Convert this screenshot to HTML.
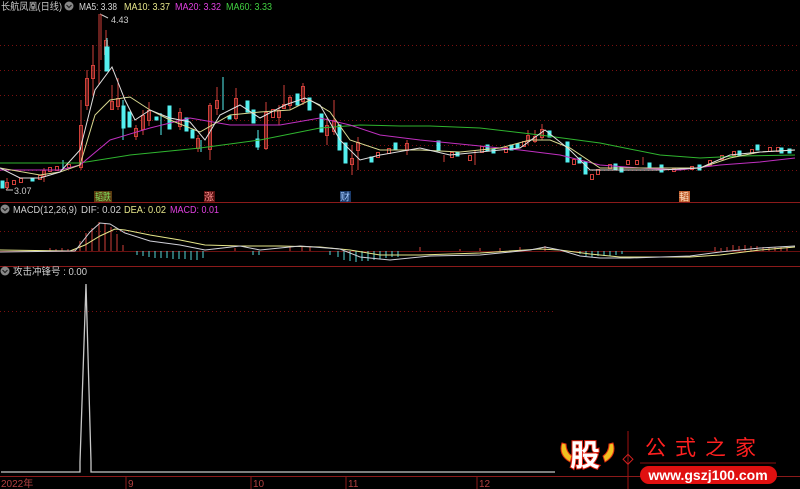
<!DOCTYPE html>
<html><head><meta charset="utf-8"><style>
html,body{margin:0;padding:0;background:#000;width:800px;height:489px;overflow:hidden}
svg{display:block}
text{font-family:"Liberation Sans","Noto Sans CJK SC",sans-serif}
</style></head><body>
<svg width="800" height="489" viewBox="0 0 800 489" xmlns="http://www.w3.org/2000/svg">
<g stroke="#7a1010" stroke-width="1" stroke-dasharray="1,3">
<line x1="0" y1="45.5" x2="800" y2="45.5"/><line x1="0" y1="70.5" x2="800" y2="70.5"/>
<line x1="0" y1="95.5" x2="800" y2="95.5"/><line x1="0" y1="120.5" x2="800" y2="120.5"/>
<line x1="0" y1="145.5" x2="800" y2="145.5"/><line x1="0" y1="170.5" x2="800" y2="170.5"/>
<line x1="0" y1="231.5" x2="800" y2="231.5"/><line x1="0" y1="311.5" x2="555" y2="311.5"/>
</g>
<line x1="0" y1="202.5" x2="800" y2="202.5" stroke="#8b1a1a"/>
<line x1="0" y1="266.5" x2="800" y2="266.5" stroke="#8b1a1a"/>
<line x1="0" y1="476.5" x2="800" y2="476.5" stroke="#8b1a1a"/>
<line x1="0" y1="251.5" x2="800" y2="251.5" stroke="#6a1010" stroke-width="1"/>
<!-- header -->
<text x="1" y="10" font-size="10" fill="#c8c8c8" textLength="61" lengthAdjust="spacingAndGlyphs">长航凤凰(日线)</text>
<circle cx="69" cy="6" r="4.5" fill="#888"/><path d="M66.5 5 L69 7.5 L71.5 5" stroke="#222" fill="none" stroke-width="1.2"/>
<text x="79" y="10" font-size="10" fill="#d8d8d8" textLength="38" lengthAdjust="spacingAndGlyphs">MA5: 3.38</text>
<text x="124" y="10" font-size="10" fill="#e6e68a" textLength="46" lengthAdjust="spacingAndGlyphs">MA10: 3.37</text>
<text x="175" y="10" font-size="10" fill="#e040e0" textLength="46" lengthAdjust="spacingAndGlyphs">MA20: 3.32</text>
<text x="226" y="10" font-size="10" fill="#40d040" textLength="46" lengthAdjust="spacingAndGlyphs">MA60: 3.33</text>
<text x="111" y="23" font-size="9" fill="#ccc">4.43</text>
<path d="M100 14 L108 18" stroke="#ccc"/>
<text x="14" y="194" font-size="9" fill="#ccc">3.07</text>
<path d="M6 190 L13 190 M6 190 L8 188" stroke="#ccc"/>
<!-- candles -->
<g stroke-width="1">
<g stroke="#d0403a" fill="none">
<line x1="7" y1="178" x2="7" y2="190"/><rect x="5.5" y="182.5" width="3" height="5"/>
<rect x="12.5" y="180.5" width="3" height="4"/><rect x="19.5" y="178.5" width="3" height="4"/>
<rect x="38.5" y="175.5" width="3" height="4"/><line x1="44" y1="168" x2="44" y2="182"/><rect x="42.5" y="170.5" width="3" height="6"/>
<rect x="48.5" y="167.5" width="3" height="4"/><rect x="55.5" y="166.5" width="3" height="4"/><rect x="67.5" y="164.5" width="3" height="3"/>
<line x1="81" y1="100" x2="81" y2="170"/><rect x="79.5" y="125.5" width="3" height="42"/>
<line x1="87" y1="70" x2="87" y2="110"/><rect x="85.5" y="78.5" width="3" height="27"/>
<line x1="93" y1="45" x2="93" y2="95"/><rect x="91.5" y="65.5" width="3" height="13"/>
<line x1="99" y1="14" x2="99" y2="85"/><line x1="101" y1="14" x2="101" y2="60"/>
<line x1="106" y1="30" x2="106" y2="70"/><rect x="104.5" y="40.5" width="3" height="14"/>
<line x1="112" y1="85" x2="112" y2="110"/><rect x="110.5" y="101.5" width="3" height="8"/>
<line x1="118" y1="78" x2="118" y2="110"/><rect x="116.5" y="98.5" width="3" height="8"/>
<line x1="136" y1="125" x2="136" y2="140"/><rect x="134.5" y="128.5" width="3" height="8"/>
<line x1="143" y1="110" x2="143" y2="135"/><rect x="141.5" y="115.5" width="3" height="14"/>
<line x1="149" y1="102" x2="149" y2="126"/><rect x="147.5" y="110.5" width="3" height="10"/>
<line x1="180" y1="108" x2="180" y2="130"/><rect x="178.5" y="112.5" width="3" height="14"/>
<line x1="198" y1="135" x2="198" y2="152"/><rect x="196.5" y="138.5" width="3" height="10"/>
<line x1="210" y1="103" x2="210" y2="160"/><rect x="208.5" y="105.5" width="3" height="44"/>
<line x1="217" y1="87" x2="217" y2="115"/><rect x="215.5" y="100.5" width="3" height="8"/>
<line x1="236" y1="88" x2="236" y2="120"/><rect x="234.5" y="98.5" width="3" height="20"/>
<line x1="266" y1="102" x2="266" y2="150"/><rect x="264.5" y="112.5" width="3" height="36"/>
<rect x="271.5" y="109.5" width="3" height="8"/><line x1="279" y1="105" x2="279" y2="125"/><rect x="277.5" y="110.5" width="3" height="7"/>
<line x1="284" y1="85" x2="284" y2="108"/><rect x="282.5" y="104.5" width="3" height="4"/>
<line x1="290" y1="95" x2="290" y2="110"/><rect x="288.5" y="97.5" width="3" height="8"/>
<line x1="303" y1="83" x2="303" y2="105"/><rect x="301.5" y="86.5" width="3" height="15"/>
<line x1="327" y1="118" x2="327" y2="145"/><rect x="325.5" y="125.5" width="3" height="10"/>
<line x1="334" y1="100" x2="334" y2="135"/><rect x="332.5" y="120.5" width="3" height="11"/>
<line x1="352" y1="145" x2="352" y2="175"/><rect x="350.5" y="158.5" width="3" height="6"/>
<line x1="358" y1="137" x2="358" y2="170"/><rect x="356.5" y="142.5" width="3" height="8"/>
<rect x="376.5" y="152.5" width="3" height="5"/><rect x="387.5" y="148.5" width="3" height="5"/><line x1="407" y1="140" x2="407" y2="155"/><rect x="405.5" y="143.5" width="3" height="7"/>
<line x1="444" y1="155" x2="444" y2="162"/><rect x="450.5" y="152.5" width="3" height="5"/><rect x="468.5" y="155.5" width="3" height="5"/><line x1="475" y1="150" x2="475" y2="165"/>
<rect x="480.5" y="146.5" width="3" height="6"/><rect x="504.5" y="147.5" width="3" height="5"/><rect x="522.5" y="141.5" width="3" height="5"/>
<line x1="528" y1="130" x2="528" y2="145"/><rect x="526.5" y="135.5" width="3" height="6"/><line x1="535" y1="130" x2="535" y2="143"/><rect x="533.5" y="136.5" width="3" height="5"/>
<line x1="542" y1="124" x2="542" y2="140"/><rect x="540.5" y="129.5" width="3" height="8"/>
<rect x="572.5" y="159.5" width="3" height="5"/><rect x="590.5" y="174.5" width="3" height="5"/><rect x="596.5" y="169.5" width="3" height="5"/>
<rect x="608.5" y="164.5" width="3" height="4"/><rect x="626.5" y="160.5" width="3" height="4"/><rect x="635.5" y="160.5" width="3" height="4"/><line x1="643" y1="157" x2="643" y2="165"/>
<rect x="672.5" y="168.5" width="3" height="3"/><rect x="690.5" y="166.5" width="3" height="3"/><rect x="708.5" y="160.5" width="3" height="5"/>
<rect x="720.5" y="155.5" width="3" height="4"/><rect x="732.5" y="151.5" width="3" height="4"/><rect x="750.5" y="149.5" width="3" height="4"/><rect x="768.5" y="147.5" width="3" height="4"/><rect x="776.5" y="147.5" width="3" height="4"/>
</g>
<g fill="#54f0f0" stroke="#54f0f0">
<rect x="1" y="181" width="3" height="7"/><rect x="31" y="179" width="3" height="2"/><line x1="63" y1="160" x2="63" y2="170"/>
<line x1="107" y1="38" x2="107" y2="48"/><rect x="105" y="47" width="4" height="24"/>
<line x1="123" y1="100" x2="123" y2="140"/><rect x="122" y="106" width="3" height="22"/>
<rect x="128" y="112" width="3" height="15"/><rect x="155" y="117" width="3" height="3"/><line x1="161" y1="113" x2="161" y2="135"/>
<rect x="168" y="106" width="3" height="23"/><rect x="185" y="118" width="3" height="13"/><rect x="191" y="130" width="3" height="8"/><line x1="201" y1="140" x2="201" y2="152"/>
<line x1="223" y1="77" x2="223" y2="110"/><rect x="228" y="116" width="3" height="3"/><rect x="246" y="101" width="3" height="11"/><rect x="252" y="110" width="3" height="13"/><rect x="256" y="139" width="3" height="8"/><line x1="258" y1="130" x2="258" y2="150"/>
<rect x="296" y="94" width="3" height="11"/><rect x="308" y="98" width="3" height="12"/><rect x="320" y="114" width="3" height="18"/><rect x="338" y="125" width="3" height="25"/><rect x="344" y="143" width="3" height="20"/>
<rect x="370" y="157" width="3" height="5"/><rect x="394" y="143" width="3" height="7"/><rect x="437" y="141" width="3" height="10"/><rect x="456" y="152" width="3" height="4"/><rect x="486" y="145" width="3" height="6"/><rect x="492" y="149" width="3" height="4"/>
<rect x="510" y="145" width="3" height="5"/><rect x="516" y="144" width="3" height="4"/><rect x="548" y="131" width="3" height="6"/><rect x="566" y="142" width="3" height="20"/><rect x="578" y="158" width="3" height="5"/><rect x="584" y="162" width="3" height="12"/>
<rect x="614" y="164" width="3" height="6"/><rect x="620" y="167" width="3" height="5"/><rect x="648" y="163" width="3" height="4"/><rect x="660" y="165" width="3" height="7"/><rect x="698" y="165" width="3" height="5"/><rect x="738" y="151" width="3" height="5"/><rect x="756" y="145" width="3" height="5"/><rect x="780" y="148" width="3" height="5"/><rect x="788" y="149" width="3" height="4"/>
</g>
</g>
<!-- MAs -->
<g fill="none" stroke-width="1">
<polyline stroke="#2fb52f" points="0,163 80,163 130,155 200,148 260,140 320,128 360,125 400,126 430,126 480,128 540,135 600,143 660,155 700,158 740,156 795,155"/>
<polyline stroke="#c030c0" points="0,170 60,170 80,165 110,140 150,128 190,118 230,125 280,125 320,118 350,125 380,135 420,140 470,145 520,150 560,155 600,165 640,168 680,170 720,165 760,162 795,158"/>
<polyline stroke="#d8d890" points="0,168 40,175 60,172 80,165 95,115 110,100 130,97 150,110 170,120 200,132 230,115 260,112 290,110 310,100 330,112 350,140 380,150 420,150 460,152 500,148 530,140 550,140 570,148 600,168 640,168 670,168 700,168 730,158 760,152 795,150"/>
<polyline stroke="#e0e0e0" points="0,168 20,178 40,178 60,172 80,150 95,90 112,67 125,100 135,120 150,110 170,118 190,122 205,140 220,115 240,105 260,118 285,105 305,98 320,105 340,140 360,160 380,155 420,148 450,155 480,152 520,148 545,130 570,150 590,170 620,170 660,170 700,168 730,155 760,152 795,150"/>
</g>
<!-- signal labels -->
<rect x="94" y="191" width="18" height="11" fill="#5a3a10"/><text x="95" y="200.5" font-size="10" fill="#7fdf5f" textLength="16" lengthAdjust="spacingAndGlyphs">韬跌</text>
<rect x="204" y="191" width="11" height="11" fill="#5a1010"/><text x="204" y="200.5" font-size="10" fill="#ff9090">涨</text>
<rect x="340" y="191" width="11" height="11" fill="#1a3a6a"/><text x="340" y="200.5" font-size="10" fill="#a0c8ff">财</text>
<rect x="679" y="191" width="11" height="11" fill="#c06030"/><text x="679" y="200.5" font-size="10" fill="#ffe0c0">韬</text>
<!-- MACD -->
<circle cx="5" cy="209" r="4.5" fill="#888"/><path d="M2.5 208 L5 210.5 L7.5 208" stroke="#222" fill="none" stroke-width="1.2"/>
<text x="13" y="213" font-size="10" fill="#d0d0d0" textLength="64" lengthAdjust="spacingAndGlyphs">MACD(12,26,9)</text>
<text x="81" y="213" font-size="10" fill="#d0d0d0" textLength="40" lengthAdjust="spacingAndGlyphs">DIF: 0.02</text>
<text x="124" y="213" font-size="10" fill="#e6e68a" textLength="42" lengthAdjust="spacingAndGlyphs">DEA: 0.02</text>
<text x="170" y="213" font-size="10" fill="#e040e0" textLength="49" lengthAdjust="spacingAndGlyphs">MACD: 0.01</text>
<g stroke="#d0403a">
<line x1="50" y1="251" x2="50" y2="248"/><line x1="56" y1="251" x2="56" y2="249"/><line x1="62" y1="251" x2="62" y2="248"/><line x1="68" y1="251" x2="68" y2="249"/><line x1="74" y1="251" x2="74" y2="249"/>
<line x1="80" y1="251" x2="80" y2="241"/><line x1="86" y1="251" x2="86" y2="233"/><line x1="92" y1="251" x2="92" y2="228"/><line x1="99" y1="251" x2="99" y2="222"/><line x1="105" y1="251" x2="105" y2="224"/><line x1="111" y1="251" x2="111" y2="227"/><line x1="117" y1="251" x2="117" y2="234"/><line x1="123" y1="251" x2="123" y2="245"/>
<line x1="235" y1="251" x2="235" y2="248"/><line x1="290" y1="251" x2="290" y2="246"/><line x1="302" y1="251" x2="302" y2="246"/><line x1="310" y1="251" x2="310" y2="247"/>
<line x1="420" y1="251" x2="420" y2="247"/><line x1="460" y1="251" x2="460" y2="249"/><line x1="480" y1="251" x2="480" y2="248"/><line x1="500" y1="251" x2="500" y2="248"/><line x1="520" y1="251" x2="520" y2="247"/><line x1="545" y1="251" x2="545" y2="246"/>
<line x1="715" y1="251" x2="715" y2="247"/><line x1="721" y1="251" x2="721" y2="248"/><line x1="727" y1="251" x2="727" y2="247"/><line x1="733" y1="251" x2="733" y2="245"/><line x1="739" y1="251" x2="739" y2="246"/><line x1="745" y1="251" x2="745" y2="245"/><line x1="751" y1="251" x2="751" y2="246"/><line x1="757" y1="251" x2="757" y2="246"/><line x1="763" y1="251" x2="763" y2="247"/><line x1="769" y1="251" x2="769" y2="247"/><line x1="775" y1="251" x2="775" y2="247"/><line x1="781" y1="251" x2="781" y2="247"/><line x1="787" y1="251" x2="787" y2="247"/>
</g>
<g stroke="#54d8d8">
<line x1="137" y1="251" x2="137" y2="255"/><line x1="143" y1="251" x2="143" y2="256"/><line x1="149" y1="251" x2="149" y2="257"/><line x1="155" y1="251" x2="155" y2="258"/><line x1="161" y1="251" x2="161" y2="258"/><line x1="167" y1="251" x2="167" y2="258"/><line x1="173" y1="251" x2="173" y2="259"/><line x1="179" y1="251" x2="179" y2="259"/><line x1="185" y1="251" x2="185" y2="259"/><line x1="191" y1="251" x2="191" y2="260"/><line x1="197" y1="251" x2="197" y2="260"/><line x1="203" y1="251" x2="203" y2="258"/>
<line x1="253" y1="251" x2="253" y2="255"/><line x1="259" y1="251" x2="259" y2="255"/><line x1="330" y1="251" x2="330" y2="255"/><line x1="338" y1="251" x2="338" y2="257"/><line x1="344" y1="251" x2="344" y2="260"/><line x1="350" y1="251" x2="350" y2="261"/><line x1="356" y1="251" x2="356" y2="262"/><line x1="362" y1="251" x2="362" y2="261"/><line x1="368" y1="251" x2="368" y2="261"/><line x1="374" y1="251" x2="374" y2="260"/><line x1="380" y1="251" x2="380" y2="259"/><line x1="386" y1="251" x2="386" y2="258"/><line x1="392" y1="251" x2="392" y2="257"/><line x1="398" y1="251" x2="398" y2="257"/>
<line x1="580" y1="251" x2="580" y2="254"/><line x1="586" y1="251" x2="586" y2="256"/><line x1="592" y1="251" x2="592" y2="257"/><line x1="598" y1="251" x2="598" y2="256"/><line x1="604" y1="251" x2="604" y2="256"/><line x1="610" y1="251" x2="610" y2="256"/><line x1="616" y1="251" x2="616" y2="255"/><line x1="622" y1="251" x2="622" y2="254"/>
</g>
<g fill="none">
<polyline stroke="#e6e68a" points="0,250 70,251 85,245 100,236 115,229 125,230 150,235 180,240 205,245 240,246 280,246 320,247 350,250 380,255 420,255 480,253 540,249 560,250 590,254 620,257 650,257 690,257 720,255 760,250 795,247"/>
<polyline stroke="#d0d0d8" points="0,252 75,251 90,232 100,223 110,224 125,233 150,241 180,245 205,250 240,246 260,250 300,246 340,249 360,257 390,260 430,256 480,255 530,250 545,247 560,250 580,256 600,258 630,258 690,256 720,252 760,248 795,246"/>
</g>
<!-- attack signal -->
<circle cx="5" cy="271" r="4.5" fill="#888"/><path d="M2.5 270 L5 272.5 L7.5 270" stroke="#222" fill="none" stroke-width="1.2"/>
<text x="13" y="275" font-size="10" fill="#d0d0d0" textLength="74" lengthAdjust="spacingAndGlyphs">攻击冲锋号 : 0.00</text>
<polyline fill="none" stroke="#c8c8c8" stroke-width="1.3" points="1,472 80,472 80,462 86,284 91,462 91,472 555,472"/>
<!-- axis -->
<g stroke="#8b1a1a"><line x1="126" y1="476" x2="126" y2="489"/><line x1="251" y1="476" x2="251" y2="489"/><line x1="346" y1="476" x2="346" y2="489"/><line x1="477" y1="476" x2="477" y2="489"/></g>
<g fill="#b04040" font-size="10"><text x="1" y="487">2022年</text><text x="128" y="487">9</text><text x="253" y="487">10</text><text x="348" y="487">11</text><text x="479" y="487">12</text></g>
<!-- watermark -->
<line x1="628" y1="431" x2="628" y2="489" stroke="#a01010"/>
<rect x="624" y="456" width="7" height="7" transform="rotate(45 628 460)" fill="none" stroke="#d02020"/>
<path d="M562 443 Q558 455 570 462 L572 456 Q566 452 566 444Z M613 443 Q617 455 605 462 L603 456 Q609 452 609 444Z" fill="#f0c020" stroke="#e03010"/>
<text x="570" y="466" font-size="30" font-weight="bold" fill="#fff" stroke="#e02010" stroke-width="2" paint-order="stroke" font-family="Noto Sans CJK SC,sans-serif">股</text>
<text x="645" y="455" font-size="21" fill="#ff2020" letter-spacing="9" font-family="Noto Serif CJK SC,serif">公式之家</text>
<line x1="640" y1="463" x2="776" y2="463" stroke="#8b1010"/>
<rect x="640" y="466" width="137" height="18" rx="9" fill="#e01010"/>
<text x="708" y="480" font-size="14" font-weight="bold" fill="#fff" text-anchor="middle">www.gszj100.com</text>
</svg>
</body></html>
